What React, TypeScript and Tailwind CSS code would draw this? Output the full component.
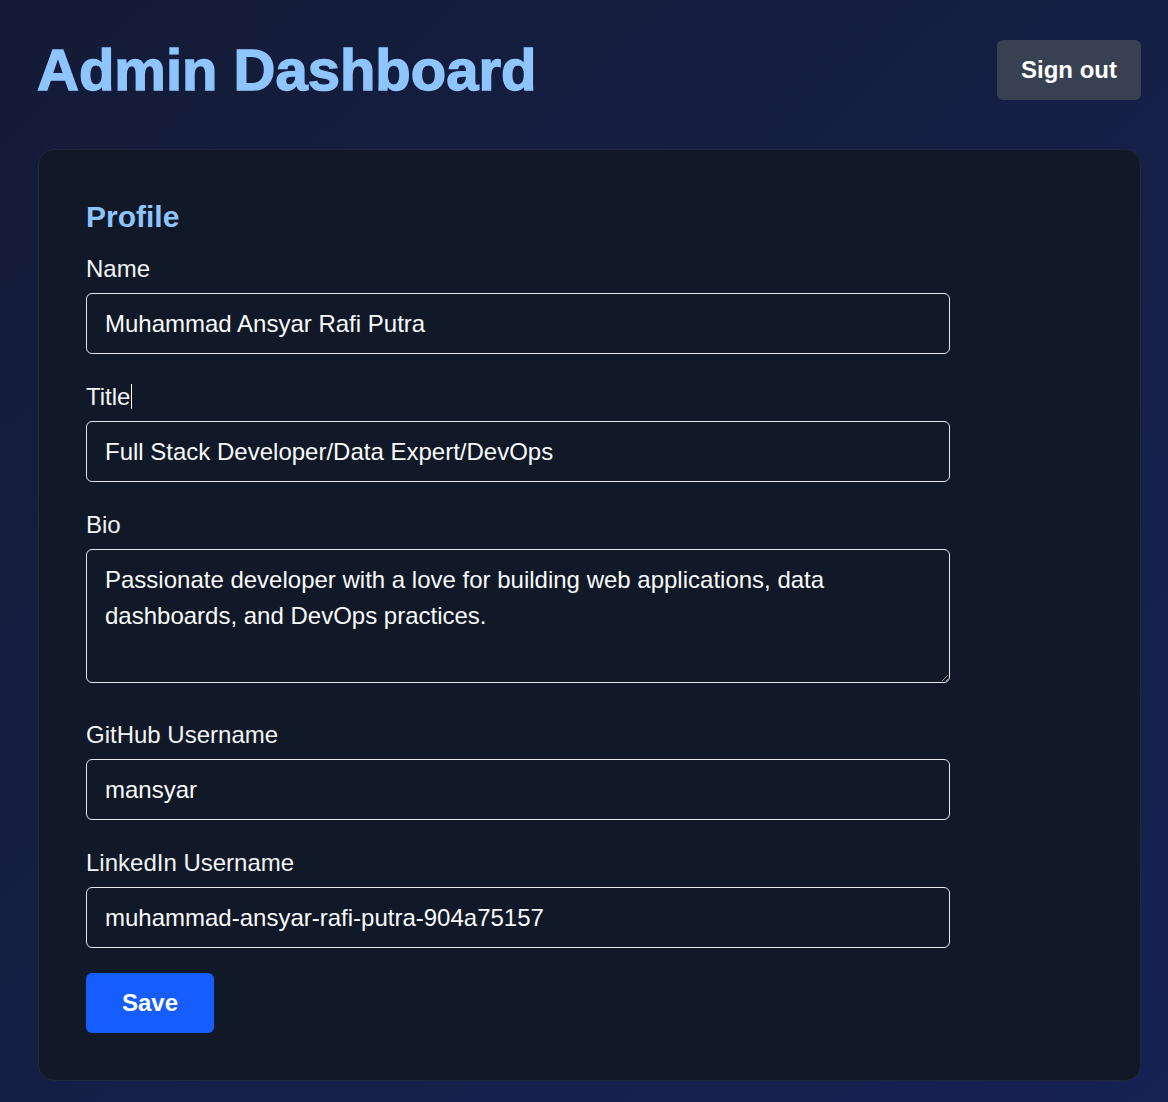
import React from 'react';

const FONT = { fontFamily: '"Liberation Sans", Arial, sans-serif' };

type FieldProps = {
  label: React.ReactNode;
  value: string;
  className?: string;
};

function Field({ label, value, className }: FieldProps) {
  return (
    <div className={className}>
      <label className="mb-[6px] block text-[24px] leading-[36px] text-gray-100">{label}</label>
      <input
        type="text"
        defaultValue={value}
        className="block h-[61px] w-[864px] rounded-[6px] border border-[#e5e7eb] bg-transparent px-[18px] text-[24px] leading-[35px] text-gray-50 outline-none"
      />
    </div>
  );
}

export default function App() {
  return (
    <div
      style={FONT}
      className="min-h-screen bg-gradient-to-br from-[#131b36] to-[#172255] pb-[20px] pl-[38px] pr-[27px] pt-[40px]"
    >
      <header className="mb-[49px] flex h-[60px] items-center justify-between">
        <h1 className="-ml-px text-[58px] font-bold leading-none text-[#8ec5ff] [-webkit-text-stroke:1.4px_#8ec5ff]">
          Admin Dashboard
        </h1>
        <button
          type="button"
          className="h-[60px] rounded-[6px] bg-[#374151] px-[24px] text-[24px] font-bold text-white"
        >
          Sign out
        </button>
      </header>

      <main className="rounded-[16px] border border-[#1f2937] bg-[#111827] px-[47px] pb-[47px] pt-[49px]">
        <h2 className="mb-[16px] text-[30px] font-bold leading-[36px] text-[#8ec5ff]">Profile</h2>

        <Field label="Name" value="Muhammad Ansyar Rafi Putra" className="mb-[25px]" />
        <Field
          label={
            <>
              Title
              <span className="ml-px inline-block h-[25px] w-px translate-y-[4px] bg-white align-baseline" />
            </>
          }
          value="Full Stack Developer/Data Expert/DevOps"
          className="mb-[25px]"
        />

        <div className="mb-[34px]">
          <label className="mb-[6px] block text-[24px] leading-[36px] text-gray-100">Bio</label>
          <textarea
            defaultValue="Passionate developer with a love for building web applications, data dashboards, and DevOps practices."
            className="block h-[134px] w-[864px] rounded-[6px] border border-[#e5e7eb] bg-transparent px-[18px] py-[12px] text-[24px] leading-[36px] text-gray-50 outline-none"
          />
        </div>

        <Field label="GitHub Username" value="mansyar" className="mb-[25px]" />
        <Field label="LinkedIn Username" value="muhammad-ansyar-rafi-putra-904a75157" className="mb-[25px]" />

        <button
          type="button"
          className="h-[60px] w-[128px] rounded-[6px] bg-[#155dfc] text-[24px] font-bold text-white"
        >
          Save
        </button>
      </main>
    </div>
  );
}
